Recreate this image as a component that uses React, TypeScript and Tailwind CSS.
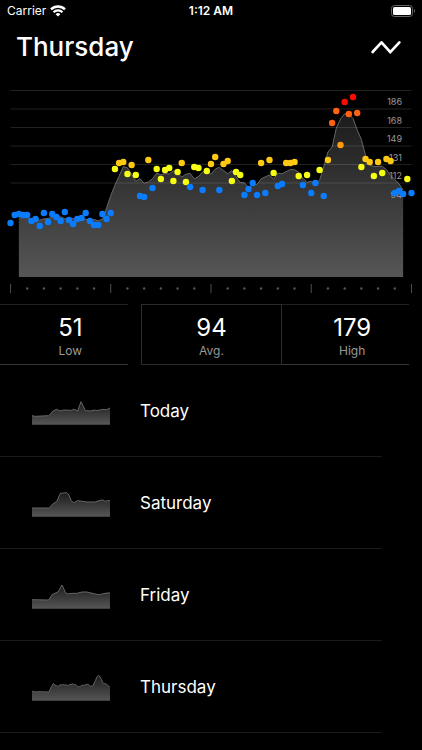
import React from 'react';

const thursday = [
  54, 62, 63, 62, 62, 56, 58, 51, 64, 55, 63, 60, 56, 65, 57, 53, 58, 59, 64,
  56, 52, 52, 63, 58, 64, 108, 114, 115, 103, 112, 102, 81, 80, 117, 89, 108,
  98, 107, 109, 96, 105, 114, 95, 90, 110, 109, 87, 106, 113, 120, 87, 113, 116,
  96, 105, 102, 82, 88, 94, 82, 114, 84, 117, 104, 91, 93, 114, 114, 115, 101,
  92, 102, 84, 94, 107, 81, 117, 154, 166, 132, 175, 163, 180, 164, 110, 118,
  115, 101, 115, 104, 118, 116, 84, 86, 83, 98, 84,
];

const zones = [186, 168, 149, 131, 112, 94];

const zoneColor = (bpm: number) => {
  if (bpm >= 168) return '#ff0a00';
  if (bpm >= 149) return '#ff6210';
  if (bpm >= 131) return '#ff9b10';
  if (bpm >= 112) return '#ffc812';
  if (bpm > 94) return '#f6ff12';
  return '#0a7cff';
};

// moving average over five samples
const averages = thursday.slice(2, -2).map((_, i) => {
  const part = thursday.slice(i, i + 5);
  return part.reduce((a, b) => a + b, 0) / part.length;
});

type Point = [number, number];

const days: { name: string; points: Point[] }[] = [
  {
    name: 'Today',
    points: [
      [0, 27], [10, 25], [50, 27], [57, 34], [63, 41], [74, 46], [84, 41],
      [95, 44], [118, 43], [125, 46], [131, 44], [137, 41], [147, 69],
      [160, 42], [175, 41], [188, 44], [195, 42], [212, 46], [224, 45],
      [234, 50],
    ],
  },
  {
    name: 'Saturday',
    points: [
      [0, 26], [50, 26], [56, 31], [63, 39], [74, 45], [85, 70], [95, 71],
      [103, 72], [109, 68], [118, 48], [125, 42], [137, 48], [165, 44],
      [188, 44], [205, 49], [213, 50], [220, 46], [226, 48], [234, 48],
    ],
  },
  {
    name: 'Friday',
    points: [
      [0, 27], [50, 26], [60, 42], [78, 50], [90, 71], [101, 47], [108, 44],
      [120, 46], [135, 46], [150, 50], [165, 50], [190, 44], [200, 42],
      [225, 47], [234, 47],
    ],
  },
  {
    name: 'Thursday',
    points: averages.map((bpm, i) => [
      (i * 234) / (averages.length - 1),
      bpm * 0.46,
    ]),
  },
];

const StatusBar = () => (
  <div className="grid grid-cols-3 items-center h-[22px] px-[7px] text-xs text-white">
    <div className="flex items-center gap-1">
      <span>Carrier</span>
      <svg width="16" height="12" viewBox="0 0 16 12" fill="none">
        <path d="M1 4.4a10 10 0 0 1 14 0" stroke="white" strokeWidth="2.4" />
        <path d="M3.5 7.3a6.4 6.4 0 0 1 9 0" stroke="white" strokeWidth="2.2" />
        <path d="M8 11.6 5.6 9.2a3.4 3.4 0 0 1 4.8 0z" fill="white" />
      </svg>
    </div>
    <span className="text-center font-semibold">1:12 AM</span>
    <svg className="justify-self-end" width="24" height="12" viewBox="0 0 24 12">
      <rect x="0.5" y="0.5" width="21" height="11" rx="3" fill="none" stroke="#666" />
      <rect x="2" y="2" width="18" height="8" rx="1.5" fill="white" />
      <path d="M23 4v4q1-.6 1-2t-1-2z" fill="#666" />
    </svg>
  </div>
);

const HeartRateChart = () => {
  const x = (i: number) => 10.5 + i * 4.177;
  const y = (bpm: number) => 197 - bpm;
  const line = averages.map((bpm, i) => `${x(i + 2)},${y(bpm)}`).join(' ');

  return (
    <svg className="w-full" viewBox="0 0 422 224" role="img" aria-label="Heart rate">
      <defs>
        <linearGradient id="area" x1="0" y1="0" x2="0" y2="1">
          <stop offset="0" stopColor="#1b1b1b" />
          <stop offset="1" stopColor="#565656" />
        </linearGradient>
      </defs>
      <polygon
        points={`${x(2)},197 ${line} ${x(94)},197`}
        fill="url(#area)"
      />
      <polyline points={line} fill="none" stroke="#666" />
      {zones.map((bpm, i) => (
        <g key={bpm}>
          <path
            d={`M10.5 ${10.5 + i * 18.5}H411.5`}
            stroke="white"
            strokeOpacity="0.13"
          />
          <text
            x="402"
            y={25 + i * 18.5}
            textAnchor="end"
            fontSize="9"
            fill="#999"
          >
            {bpm}
          </text>
        </g>
      ))}
      {thursday.map((bpm, i) => (
        <circle key={i} cx={x(i)} cy={y(bpm)} r="3.2" fill={zoneColor(bpm)} />
      ))}
      {Array.from({ length: 25 }, (_, hour) =>
        hour % 6 === 0 ? (
          <path key={hour} d={`M${x(hour * 4)} 204v9`} stroke="#4c4c4c" />
        ) : (
          <circle key={hour} cx={x(hour * 4)} cy="208.5" r="1.2" fill="#555" />
        ),
      )}
    </svg>
  );
};

const Stat = ({ value, label }: { value: number; label: string }) => (
  <div className="flex flex-col items-center pt-2 h-[59px]">
    <span className="text-2xl leading-[30px] text-white">{value}</span>
    <span className="text-xs leading-4 text-[#999]">{label}</span>
  </div>
);

const Sparkline = ({ points }: { points: Point[] }) => {
  const line = points.map(([px, h]) => `${px},${80 - h}`).join(' ');

  return (
    <svg width="78" height="27" viewBox="0 0 234 81">
      <polygon points={`0,80 ${line} 234,80`} fill="url(#area)" />
      <polyline points={line} fill="none" stroke="#666" strokeWidth="3" />
    </svg>
  );
};

const App = () => {
  return (
    <div className="min-h-screen bg-black text-white font-['Inter','Liberation_Sans',sans-serif]">
      <StatusBar />
      <header className="flex items-center justify-between h-[58px] pl-4 pr-5 pb-2">
        <h1 className="text-[26px] leading-8 font-medium">Thursday</h1>
        <button type="button" aria-label="Toggle chart">
          <svg width="32" height="16" viewBox="0 0 32 16" fill="none">
            <path
              d="M2.6 13 11.5 3.4 20.3 13.2 29.4 3.4"
              stroke="white"
              strokeWidth="2.7"
              strokeLinecap="round"
              strokeLinejoin="round"
            />
          </svg>
        </button>
      </header>
      <HeartRateChart />
      <div className="grid grid-cols-3">
        <div>
          <div className="h-px mr-[13px] bg-[#222]" />
          <Stat value={51} label="Low" />
          <div className="h-px mr-[13px] bg-[#363636]" />
        </div>
        <div className="border border-r-0 border-[#2c2c2c]">
          <Stat value={94} label="Avg." />
        </div>
        <div className="border-l border-[#2c2c2c]">
          <div className="h-px mr-[13px] bg-[#222]" />
          <Stat value={179} label="High" />
          <div className="h-px mr-[13px] bg-[#363636]" />
        </div>
      </div>
      <ul>
        {days.map(({ name, points }) => (
          <li key={name} className="h-[92px] mr-10 border-b border-[#1a1a1a]">
            <button
              type="button"
              className="flex items-center w-full h-full pt-0.5 pl-8 gap-[30px] text-[17px]"
            >
              <Sparkline points={points} />
              <span>{name}</span>
            </button>
          </li>
        ))}
      </ul>
    </div>
  );
};

export default App;
